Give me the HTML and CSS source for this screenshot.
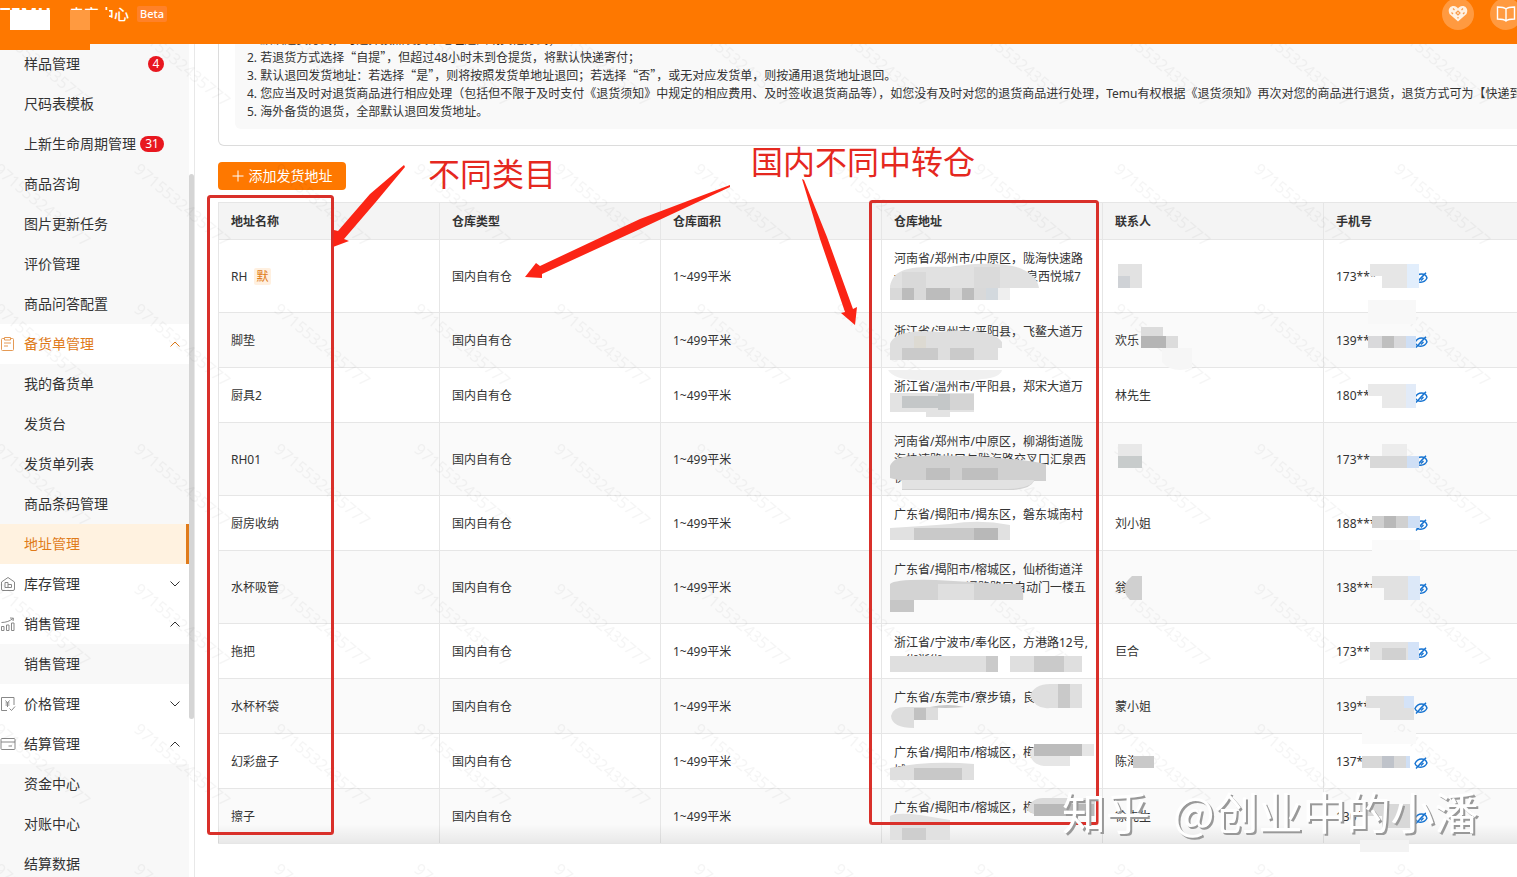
FILE: index.html
```html
<!DOCTYPE html>
<html lang="zh-CN">
<head>
<meta charset="utf-8">
<title>地址管理</title>
<link rel="stylesheet" href="styles.css">
</head>
<body>
<header class="topbar">
  <div class="brand">TEMU <span class="brand-name">卖家中心</span></div>
  <span class="beta">Beta</span>
  <div class="tools">
    <button class="tool" aria-label="收藏"><svg width="20" height="20" viewBox="0 0 20 20"><path d="M10 17.500 1.500 10C-.5 6 1.500 2 5.500 2 8 2 9.500 3.500 10 4.500 10.500 3.500 12 2 14.500 2c4 0 6 4 4 8Z" fill="#fff1e2"/><path d="m5 4.500 1.500 1.500M8 9l2-2 2 2-2 2zM15 4.500 13.500 6M3.500 8.500 5 10M16.500 8.500 15 10M10 13v1.500" stroke="#f79b4c" stroke-width="1.200" fill="none"/></svg></button>
    <button class="tool" aria-label="手册"><svg width="20" height="20" viewBox="0 0 20 20" fill="none" stroke="#fff" stroke-width="1.400"><path d="M10 5C8 3 5 3 1.500 3v12c3.500 0 6.500 0 8.500 2 2-2 5-2 8.500-2V3C15 3 12 3 10 5Zm0 0v12"/></svg></button>
  </div>
</header>
<div class="layout">
  <nav class="sidebar">
    <div class="sub">
      <a href="#">样品管理<b class="badge dot">4</b></a>
      <a href="#">尺码表模板</a>
      <a href="#">上新生命周期管理<b class="badge">31</b></a>
      <a href="#">商品咨询</a>
      <a href="#">图片更新任务</a>
      <a href="#">评价管理</a>
      <a href="#">商品问答配置</a>
    </div>
    <button class="group open"><svg class="ico" viewBox="0 0 16 16"><path d="M4.500 2.500H2.500a1 1 0 0 0-1 1v10a1 1 0 0 0 1 1h10a1 1 0 0 0 1-1v-10a1 1 0 0 0-1-1h-2M4.500 1.500h6v2.500h-6zM4 7h7M4 10h4"/></svg>备货单管理<svg class="chev" viewBox="0 0 10 6"><path d="m.5 5.500 4.500-4.500 4.500 4.500"/></svg></button>
    <div class="sub">
      <a href="#">我的备货单</a>
      <a href="#">发货台</a>
      <a href="#">发货单列表</a>
      <a href="#">商品条码管理</a>
      <a href="#" class="active">地址管理</a>
    </div>
    <button class="group"><svg class="ico" viewBox="0 0 16 16"><path d="M1.500 6 8 1.500 14.500 6v7a1.500 1.500 0 0 1-1.500 1.500H3A1.500 1.500 0 0 1 1.500 13ZM5 11.500v-5h3v5zM8 8.500h3.500v3H5"/></svg>库存管理<svg class="chev" viewBox="0 0 10 6"><path d="m.5.5 4.500 4.500L9.500.5"/></svg></button>
    <button class="group"><svg class="ico" viewBox="0 0 16 16"><path d="M1.500 10.500h2.500v4H1.500zM6.500 9H9v5.500H6.500zM11.500 7H14v7.500h-2.500zM1.500 6.500C6 6.500 10 5 13 2.500M10 2l3.500.2-.5 2.800"/></svg>销售管理<svg class="chev" viewBox="0 0 10 6"><path d="m.5 5.500 4.500-4.500 4.500 4.500"/></svg></button>
    <div class="sub"><a href="#">销售管理</a></div>
    <button class="group"><svg class="ico" viewBox="0 0 16 16"><path d="M7 14.500H1.500v-13h12.500V9M9.500 12.500l2 2 3.500-4M5.500 4.500 7.500 7l2-2.500M5.500 7h4M5.500 9h4M7.500 7v4"/></svg>价格管理<svg class="chev" viewBox="0 0 10 6"><path d="m.5.5 4.500 4.500L9.500.5"/></svg></button>
    <button class="group"><svg class="ico" viewBox="0 0 16 16"><path d="M1 3.500a1 1 0 0 1 1-1h12a1 1 0 0 1 1 1v9a1 1 0 0 1-1 1H2a1 1 0 0 1-1-1ZM1 6h14M8.500 10H12"/></svg>结算管理<svg class="chev" viewBox="0 0 10 6"><path d="m.5 5.500 4.500-4.500 4.500 4.500"/></svg></button>
    <div class="sub">
      <a href="#">资金中心</a>
      <a href="#">对账中心</a>
      <a href="#">结算数据</a>
    </div>
    <div class="thumb"></div>
  </nav>
  <main class="main">
    <section class="card">
      <ol class="notes">
        <li>1. 默认退货方式，可选择按照发货单地址退回或其他方式；</li>
        <li>2. 若退货方式选择<q>“</q>自提<q>”</q>，但超过48小时未到仓提货，将默认快递寄付；</li>
        <li>3. 默认退回发货地址：若选择<q>“</q>是<q>”</q>，则将按照发货单地址退回；若选择<q>“</q>否<q>”</q>，或无对应发货单，则按通用退货地址退回。</li>
        <li>4. 您应当及时对退货商品进行相应处理（包括但不限于及时支付《退货须知》中规定的相应费用、及时签收退货商品等），如您没有及时对您的退货商品进行处理，Temu有权根据《退货须知》再次对您的商品进行退货，退货方式可为【快递到</li>
        <li>5. 海外备货的退货，全部默认退回发货地址。</li>
      </ol>
    </section>
    <button class="add"><svg width="12" height="12" viewBox="0 0 12 12" stroke="#fff" fill="none"><path d="M6 .5v11M.5 6h11"/></svg>添加发货地址</button>
    <table class="grid">
      <thead><tr><th>地址名称</th><th>仓库类型</th><th>仓库面积</th><th>仓库地址</th><th>联系人</th><th>手机号</th></tr></thead>
      <tbody>
        <tr class="tall"><td>RH <span class="tag">默</span></td><td>国内自有仓</td><td>1~499平米</td><td>河南省/郑州市/中原区，陇海快速路<br>一一一一一一一一一一汇泉西悦城7<br>&nbsp;</td><td></td><td><span class="tel">173***</span><button class="eye" aria-label="查看手机号"><svg viewBox="0 0 14 12"><use href="#eye"/></svg></button></td></tr>
        <tr><td>脚垫</td><td>国内自有仓</td><td>1~499平米</td><td>浙江省/温州市/平阳县，飞鳌大道万<br>&nbsp;</td><td>欢乐</td><td><span class="tel">139**</span><button class="eye" aria-label="查看手机号"><svg viewBox="0 0 14 12"><use href="#eye"/></svg></button></td></tr>
        <tr><td>厨具2</td><td>国内自有仓</td><td>1~499平米</td><td>浙江省/温州市/平阳县，郑宋大道万<br>&nbsp;</td><td>林先生</td><td><span class="tel">180**</span><button class="eye" aria-label="查看手机号"><svg viewBox="0 0 14 12"><use href="#eye"/></svg></button></td></tr>
        <tr class="tall"><td>RH01</td><td>国内自有仓</td><td>1~499平米</td><td>河南省/郑州市/中原区，柳湖街道陇<br>海快速路出口与陇海路交叉口汇泉西<br>悦</td><td></td><td><span class="tel">173**</span><button class="eye" aria-label="查看手机号"><svg viewBox="0 0 14 12"><use href="#eye"/></svg></button></td></tr>
        <tr><td>厨房收纳</td><td>国内自有仓</td><td>1~499平米</td><td>广东省/揭阳市/揭东区，磐东城南村<br>&nbsp;</td><td>刘小姐</td><td><span class="tel">188***</span><button class="eye" aria-label="查看手机号"><svg viewBox="0 0 14 12"><use href="#eye"/></svg></button></td></tr>
        <tr class="tall"><td>水杯吸管</td><td>国内自有仓</td><td>1~499平米</td><td>广东省/揭阳市/榕城区，仙桥街道洋<br>一一一一一一通路路口自动门一楼五<br>&nbsp;</td><td>翁</td><td><span class="tel">138***</span><button class="eye" aria-label="查看手机号"><svg viewBox="0 0 14 12"><use href="#eye"/></svg></button></td></tr>
        <tr><td>拖把</td><td>国内自有仓</td><td>1~499平米</td><td>浙江省/宁波市/奉化区，方港路12号,<br>一街浙街</td><td>巨合</td><td><span class="tel">173**</span><button class="eye" aria-label="查看手机号"><svg viewBox="0 0 14 12"><use href="#eye"/></svg></button></td></tr>
        <tr><td>水杯杯袋</td><td>国内自有仓</td><td>1~499平米</td><td>广东省/东莞市/寮步镇，良<br>&nbsp;</td><td>蒙小姐</td><td><span class="tel">139**</span><button class="eye" aria-label="查看手机号"><svg viewBox="0 0 14 12"><use href="#eye"/></svg></button></td></tr>
        <tr><td>幻彩盘子</td><td>国内自有仓</td><td>1~499平米</td><td>广东省/揭阳市/榕城区，梅<br>城</td><td>陈海</td><td><span class="tel">137*</span><button class="eye" aria-label="查看手机号"><svg viewBox="0 0 14 12"><use href="#eye"/></svg></button></td></tr>
        <tr><td>擦子</td><td>国内自有仓</td><td>1~499平米</td><td>广东省/揭阳市/榕城区，梅<br>&nbsp;</td><td>徐先生</td><td><span class="tel">130*</span><button class="eye" aria-label="查看手机号"><svg viewBox="0 0 14 12"><use href="#eye"/></svg></button></td></tr>
      </tbody>
    </table>
  </main>
</div>

<svg class="overlay" width="1517" height="877" viewBox="0 0 1517 877" aria-hidden="true">
  <defs>
    <symbol id="eye" viewBox="0 0 14 12"><path d="M1 6.500C2.500 3.500 5 2 7.500 2c2.800 0 4.800 1.500 5.500 4-1.200 2.700-3.500 4.200-6.200 4.200C4.200 10.200 2 9 1 6.500ZM2 11.500 12 .8M5 8 9 3.800M7 8.500 9.500 6" fill="none" stroke="#1673d1" stroke-width="1.400"/></symbol>
    <pattern id="wm" x="-10" y="20" width="140" height="140" patternUnits="userSpaceOnUse"><text class="wm" transform="translate(3 11) rotate(40)">9715532435777</text></pattern>
    <linearGradient id="fade" x1="0" y1="0" x2="0" y2="1"><stop offset="0" stop-color="#000" stop-opacity="0"/><stop offset="1" stop-color="#000" stop-opacity=".07"/></linearGradient>
  </defs>
  <rect y="44" width="1517" height="833" fill="url(#wm)"/>
  <rect x="218" y="824" width="1299" height="19" fill="url(#fade)"/>

  <!-- logo cover -->
  <path d="M0 10h109v34H90v6H0z" fill="#fe7800"/>
  <path d="M10 10h40v20H10z" fill="#fff"/><path d="M70 10h20v20H70z" fill="#ff9a40"/>

  <!-- address mosaics -->
  <path d="M890 300v-14c4-18 20-20 60-19 20-4 60-6 76 4 8 5 12 10 13 17h-30v12z" fill="#e1e1e1"/>
  <path d="M974 267h26v21h-26z" fill="#dadada"/><path d="M902 272h24v16h-24z" fill="#d9d9d9"/>
  <path d="M890 288h120v12H890z" fill="#d9d9d9"/><path d="M902 288h12v12h-12zM926 288h24v12h-24zM962 288h12v12h-12z" fill="#bcbcbc"/><path d="M986 288h12v12h-12z" fill="#d3d9de"/><path d="M998 288h12v12h-12z" fill="#efefef"/>
  <path d="M890 360v-16c4-12 26-14 50-12 30-4 56 0 62 10v6h-4v12z" fill="#dedede"/><path d="M902 348h36v12h-36zM950 348h24v12h-24z" fill="#cacaca"/><path d="M914 336h12v12h-12z" fill="#dddad2"/>
  <path d="M888 370h114q-2 8-20 9-10 3-24 1-20 3-40 0-24 0-30-10z" fill="#f0f0f0"/>
  <path d="M890 393h84v19h-24v5h-24v-5h-36z" fill="#e3e3e3"/><path d="M902 396h36v12h-36zM938 394h12v16h-12z" fill="#c4c7c8"/><path d="M950 394h24v16h-24z" fill="#d4d4d4"/>
  <path d="M890 478v-12q4-11 26-10 20-1 56 0 50 3 74 8v17h-12q-4 9-26 9h-106v-9z" fill="#d0d0d0"/><path d="M926 468h24v12h-24zM962 468h36v12h-36z" fill="#bfbfbf"/><path d="M902 480h132q-2 8-26 9H902z" fill="#e2e2e2"/>
  <path d="M890 528q34-2 60-4 30-5 60 1v15H890z" fill="#e1e1e1"/><path d="M914 528h84v12h-84z" fill="#c9c9c9"/><path d="M974 528h24v12h-24z" fill="#b8b8b8"/>
  <path d="M890 600v-16q5-5 46-4l70 4h14q4 6 3 16z" fill="#d3d3d3"/><path d="M938 584h36v16h-36z" fill="#dfdfdf"/><path d="M890 600h24v12h-24z" fill="#c6c6c6"/>
  <path d="M890 656h108v16H890zM1010 656h72v16h-72z" fill="#dfdfdf"/><path d="M986 656h12v16h-12zM1034 656h30v16h-30z" fill="#cacaca"/>
  <path d="M1030 696q4-12 20-12h32v24h-32q-14 2-20-12z" fill="#dfdfdf"/><path d="M1058 684h12v24h-12z" fill="#c9c9c9"/><path d="M891 716q2-9 14-9h33v13h-24v8q-22 0-23-12z" fill="#dddddd"/><path d="M914 708h12v12h-12z" fill="#c1c1c1"/>
  <path d="M930 707q18-4 34 0-20 2-34 0z" fill="#c8c8c8"/>
  <path d="M1030 752q3-7 12-8h52v12h-24v10h-26q-14-2-14-14z" fill="#e6e6e6"/><path d="M1034 744h48v12h-48z" fill="#bcbcbc"/>
  <path d="M890 768q40-8 84-4v16H890z" fill="#dfdfdf"/><path d="M914 768h48v12h-48z" fill="#c8c8c8"/>
  <path d="M1027 810q4-12 16-12h52v18h-50q-14-1-18-6z" fill="#dadada"/><path d="M1034 804h60v12h-60z" fill="#b8b8b8"/>
  <path d="M890 840v-24q6-4 30-1l30 5v20z" fill="#e1e1e1"/><path d="M902 828h24v12h-24z" fill="#cecece"/>

  <!-- contact mosaics -->
  <path d="M1118 264h24v24h-24z" fill="#e2e2e2"/><path d="M1118 276h12v12h-12z" fill="#cfd2d6"/>
  <path d="M1141 327h22v9h15v12h-37z" fill="#dcdcdc"/><path d="M1141 336h25v12h-25z" fill="#b5b5b5"/><path d="M1162 348h30v20q-20 6-30-6z" fill="#f6f6f6"/>
  <path d="M1118 444h24v12h-24z" fill="#e8e8e8"/><path d="M1118 456h24v12h-24z" fill="#c8cccc"/>
  <path d="M1142 576h-10q-14 12-2 24h12z" fill="#d0d0d0"/>
  <path d="M1133 756h21v12h-21z" fill="#c9c9c9"/>

  <!-- phone mosaics -->
  <path d="M1370 264h49v24h-37v-12h-12z" fill="#e6e6e6"/><path d="M1407 264h12v24h-12z" fill="#e2eefc"/>
  <path d="M1368 300h48v24h-48z" fill="#f8f8f8"/>
  <path d="M1368 336h48v12h-48z" fill="#d9d9db"/><path d="M1382 336h12v12h-12z" fill="#bfbfbf"/><path d="M1406 336h10v12h-10z" fill="#cfdff5"/>
  <path d="M1368 384h48v24h-34v-12h-14z" fill="#e9e9e9"/><path d="M1406 384h10v24h-10z" fill="#e2ebf8"/>
  <path d="M1382 444h25v12h-25z" fill="#ececec"/><path d="M1370 456h49v12h-49z" fill="#d8d8d8"/><path d="M1407 456h12v12h-12z" fill="#cfdff5"/>
  <path d="M1372 516h48v12h-48z" fill="#d0d0d0"/><path d="M1384 516h12v12h-12z" fill="#b9b9b9"/><path d="M1408 516h12v12h-12z" fill="#cfdff5"/><path d="M1372 540h48v24h-48z" fill="#fafafa"/>
  <path d="M1372 576h48v24h-36v-12h-12z" fill="#e1e1e1"/><path d="M1408 576h12v24h-12z" fill="#dce8f8"/>
  <path d="M1370 642h49v18h-49z" fill="#e2e2e2"/><path d="M1382 648h24v12h-24z" fill="#d1d1d1"/><path d="M1408 642h11v18h-11z" fill="#d4e3f8"/>
  <path d="M1366 696h48v24h-34v-12h-14z" fill="#e0e0e0"/><path d="M1404 696h10v12h-10z" fill="#d4e3f8"/>
  <path d="M1362 732h54v12h-54z" fill="#fafafa"/>
  <path d="M1362 756h48v12h-48z" fill="#d8d8d8"/><path d="M1382 756h12v12h-12z" fill="#bfc3ca"/><path d="M1406 756h4v12h-4z" fill="#cfdff5"/>
  <path d="M1360 804h50v24h-28v-12h-22z" fill="#d8d8d8"/><path d="M1360 840h49v12h-49z" fill="#f3f3f3"/>

  <!-- red callouts -->
  <rect x="208.500" y="196.500" width="124" height="637" rx="2" class="box"/>
  <rect x="870.500" y="201.500" width="227" height="622" rx="2" class="box"/>
  <g fill="#fb2415">
    <path d="M404 165 370 194 338 231 334 230 333 247 349 241 344 239 375 203 405 167z"/>
    <path d="M730 185 640 219 540 266 536 263 525 277 542 278 542 274 640 229 730 187z"/>
    <path d="M802 179 820 239 845 312 841 313 855 325 857 307 853 309 827 237 804 180z"/>
  </g>
  <text x="428" y="186" class="callout">不同类目</text>
  <text x="751" y="174" class="callout">国内不同中转仓</text>
  <text x="1062" y="830" class="zh">知乎</text>
  <text x="1173" y="830" class="zh">@创业中的小潘</text>
</svg>
</body>
</html>
```
FILE: styles.css
```css
* { box-sizing: border-box; }
body {
  position: relative;
  margin: 0;
  height: 100vh;
  overflow: hidden;
  background: #fff;
  color: #333;
  font: 12px/18px "Noto Sans", "Noto Sans CJK SC", sans-serif;
}
button { font: inherit; color: inherit; border: 0; padding: 0; background: none; }
a { color: inherit; text-decoration: none; }

.topbar {
  position: relative;
  z-index: 1;
  display: flex;
  align-items: flex-start;
  height: 44px;
  background: #fe7800;
  color: #fff;
}
.brand { display: flex; width: 129px; justify-content: space-between; font-size: 18px; font-weight: 700; line-height: 28px; white-space: nowrap; }
.brand-name { font-size: 15px; font-weight: 500; }
.beta { margin: 6px 0 0 8px; padding: 0 3px; border-radius: 2px; background: #ff8128; font-size: 11px; line-height: 16px; font-weight: 500; }
.tools { display: flex; gap: 16px; margin-left: auto; margin-right: -5px; }
.tool { display: grid; place-items: center; width: 32px; height: 32px; margin-top: -2px; border-radius: 50%; background: #ff9a40; }

.layout { display: flex; height: calc(100vh - 44px); }
.sidebar {
  position: relative;
  flex: 0 0 195px;
  padding-right: 5px;
  border-right: 1px solid #e8e8e8;
  overflow: hidden;
  font-size: 14px;
}
.sub { background: #f8f8f8; }
.sub a { display: flex; align-items: center; justify-content: space-between; height: 40px; padding: 0 25px 0 24px; white-space: nowrap; }
.sub .active { background: #fff2e0; color: #e07b1a; border-right: 3px solid #e07b1a; }
.badge { min-width: 24px; height: 16px; border-radius: 8px; background: #e8171f; color: #fff; font-size: 12px; font-weight: 400; line-height: 16px; text-align: center; }
.dot { min-width: 16px; }
.group { display: flex; align-items: center; width: 100%; height: 40px; padding-right: 9px; }
.group.open { color: #e07b1a; }
.ico { width: 16px; height: 16px; margin-right: 8px; fill: none; stroke: #888; }
.open .ico { stroke: #e59a55; }
.chev { width: 10px; height: 6px; margin-left: auto; fill: none; stroke: currentColor; }
.thumb { position: absolute; top: 130px; right: 0; width: 5px; height: 545px; border-radius: 3px; background: #d5d5d5; }

.main { flex: 1; min-width: 0; margin-top: -13px; padding-left: 23px; overflow: hidden; }
.card { margin-right: -8px; padding: 0 0 16px 16px; border: 1px solid #dcdcdc; border-top: 0; border-radius: 0 0 6px 6px; }
.notes { margin: 0; padding: 0 0 8px 12px; border-radius: 6px; background: #f9f9f9; list-style: none; white-space: nowrap; overflow: hidden; }
.notes q { quotes: none; font-family: "Noto Sans CJK SC", sans-serif; line-height: 1; }
.add { display: flex; align-items: center; justify-content: center; gap: 5px; width: 128px; height: 28px; margin: 16px 0 12px; border-radius: 4px; background: #fe7800; color: #fff; font-size: 14px; }

.grid { width: 100%; table-layout: fixed; border-collapse: separate; border-spacing: 0; border-top: 1px solid #e6e6e6; }
.grid th, .grid td { padding: 10px 12px 8px; border-bottom: 1px solid #e6e6e6; border-left: 1px solid #e6e6e6; text-align: left; white-space: nowrap; }
.grid th { width: 221px; height: 37px; background: #f4f4f4; font-weight: 600; }
.grid th:last-child { width: auto; }
.grid td { height: 55px; }
.grid .tall td { height: 73px; }
.grid tbody tr:nth-child(even) { background: #fafafa; }
.tag { margin-left: 4px; padding: 0 2px; border-radius: 2px; background: #fff0e0; color: #e07b1a; }
.tel { display: inline-block; width: 78px; }
.eye { width: 14px; height: 12px; vertical-align: middle; }
.eye svg { display: block; width: 14px; height: 12px; }

.overlay { position: absolute; top: 0; left: 0; z-index: 2; pointer-events: none; }
.wm { font-size: 16px; fill: #000; fill-opacity: .04; }
.box { fill: none; stroke: #d9302a; stroke-width: 3; }
.callout { font: 32px "Noto Sans CJK SC", sans-serif; fill: #e5281f; }
.zh { font: 44px "Noto Sans CJK SC", sans-serif; fill: #fff; filter: drop-shadow(2px 2px 0 #999); }
```
